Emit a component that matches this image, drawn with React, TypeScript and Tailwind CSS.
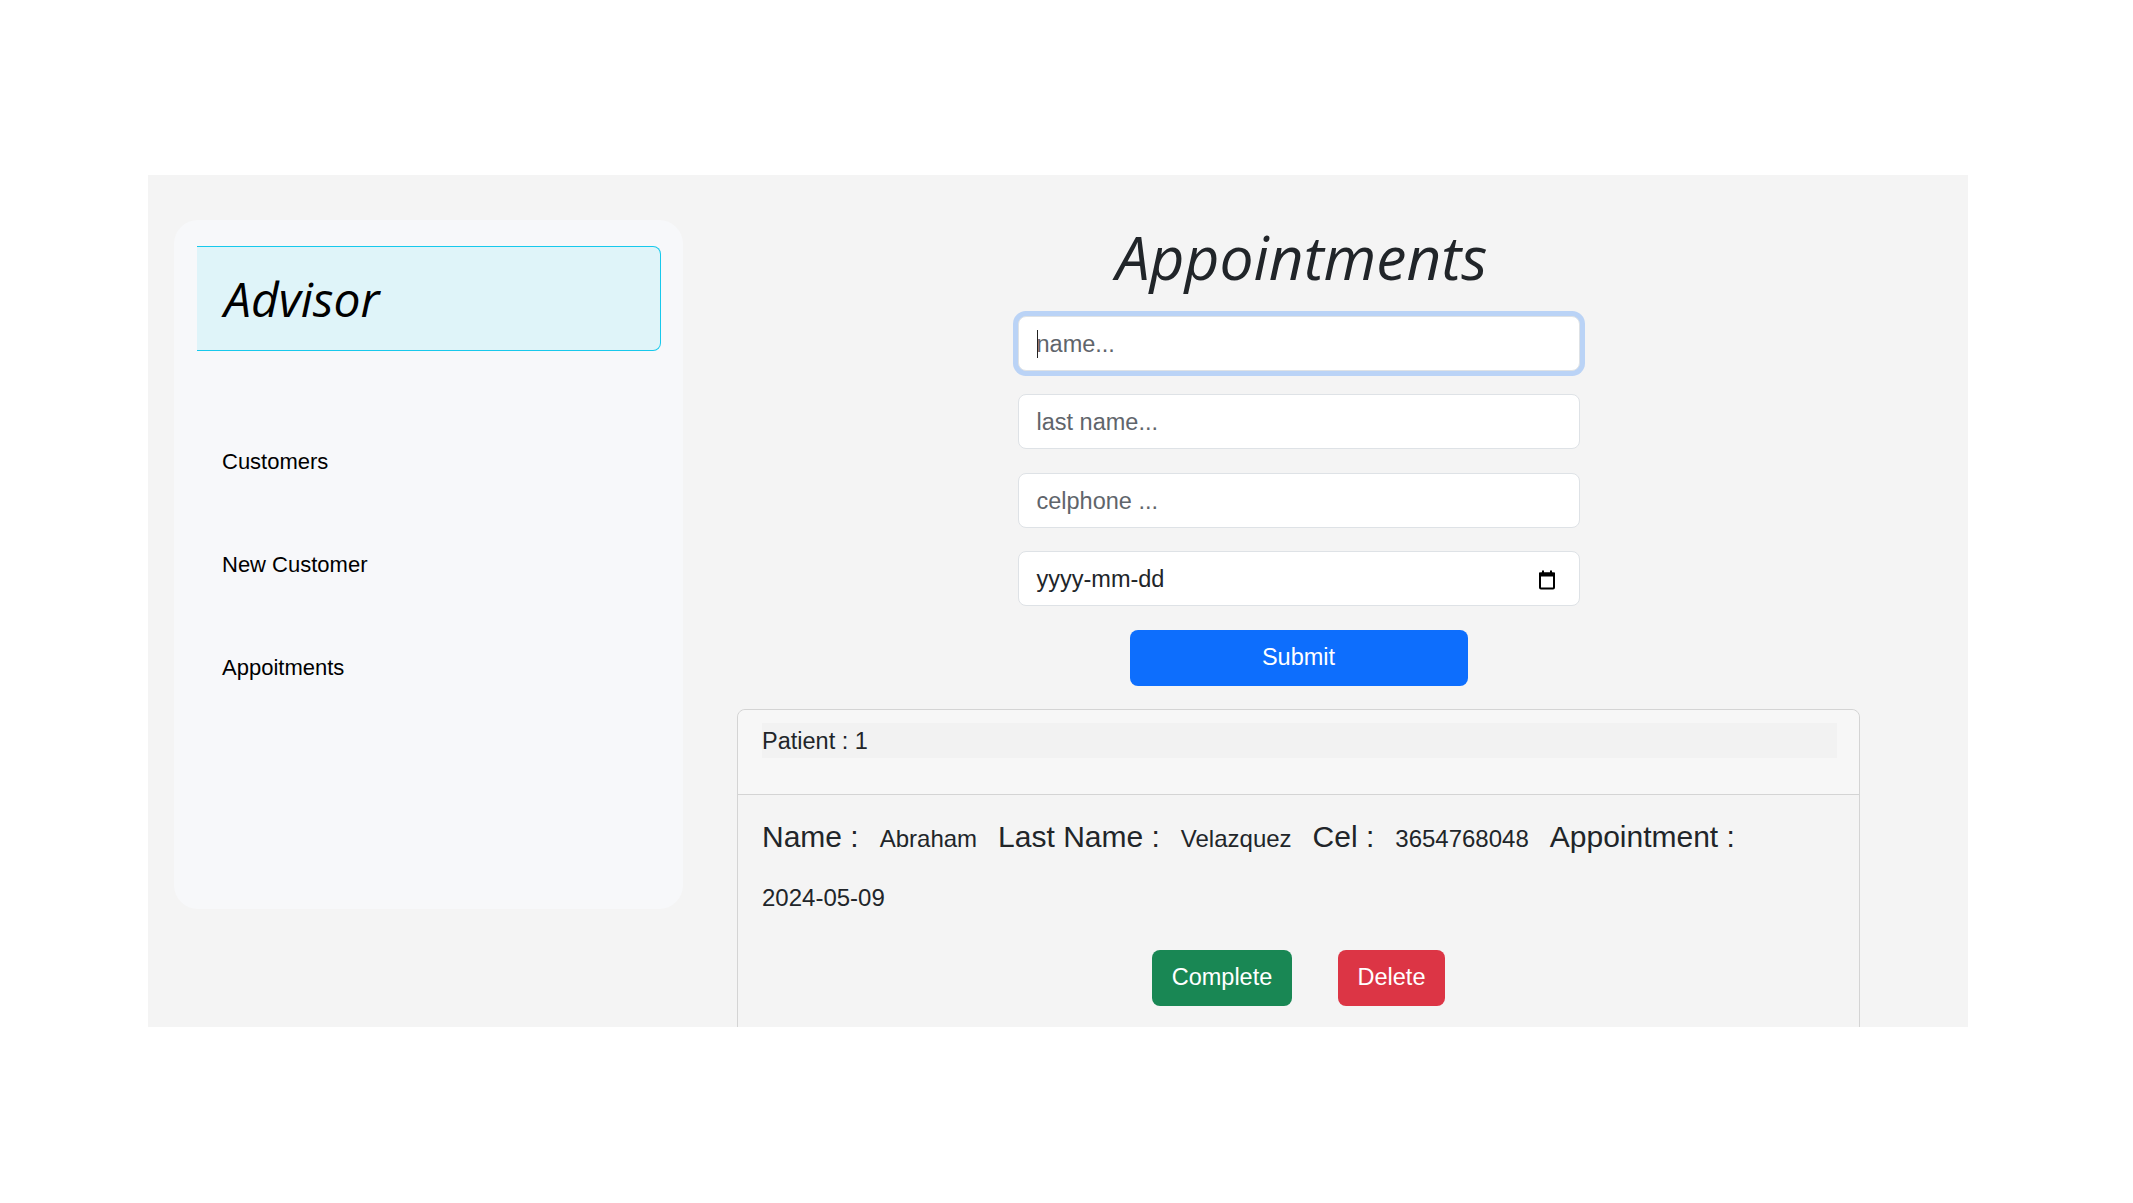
import React from 'react';

const sans = { fontFamily: '"Liberation Sans", Arial, sans-serif' };

const CalendarIcon: React.FC = () => (
  <svg width="20" height="20" viewBox="0 0 20 20" aria-hidden="true">
    <rect x="3" y="3.5" width="14" height="15" rx="1" fill="none" stroke="#000" strokeWidth="2" />
    <rect x="2" y="2.5" width="16" height="4" fill="#000" />
    <rect x="5" y="0.5" width="2" height="3" fill="#000" />
    <rect x="13" y="0.5" width="2" height="3" fill="#000" />
  </svg>
);

const navItems = ['Customers', 'New Customer', 'Appoitments'];

const Sidebar: React.FC = () => (
  <aside className="ml-[26px] mt-[45px] h-[689px] w-[509px] shrink-0 rounded-[24px] bg-[#f7f8fa] pt-[26px]">
    <div className="ml-[23px] flex h-[105px] w-[464px] items-center rounded-r-[8px] border-y-[1.5px] border-r-[1.5px] border-[#17c9ec] bg-[#dff4f9] pl-[27px]">
      <h1 className="text-[48px] italic font-normal leading-none text-black" style={{ fontFamily: '"Open Sans", sans-serif' }}>
        Advisor
      </h1>
    </div>
    <nav className="mt-[98px] flex flex-col gap-[77px] pl-[48px]">
      {navItems.map((item) => (
        <a key={item} className="text-[22px] leading-[26px] text-black">
          {item}
        </a>
      ))}
    </nav>
  </aside>
);

const inputBase =
  'h-[55px] w-[562px] rounded-[8px] border border-[#dee2e6] bg-white px-[18px] pt-[2px] text-[23.5px] text-[#212529] placeholder:text-[#5f656b] outline-none';

const Field: React.FC<{ label: string; value: string }> = ({ label, value }) => (
  <>
    <span className="text-[30px] leading-[36px] text-[#212529]">{label}</span>
    <span className="text-[24px] leading-[36px] text-[#212529]">{value}</span>
  </>
);

const AppointmentCard: React.FC = () => (
  <div className="mt-[23px] h-[440px] w-full shrink-0 rounded-t-[8px] border border-[#d4d4d4] bg-[#f4f4f4]">
    <div className="h-[85px] rounded-t-[8px] border-b border-[#d4d4d4] bg-[#f7f7f7] pl-[24px] pr-[22px] pt-[13px]">
      <div className="flex h-[35px] items-center bg-[#f2f2f2] pt-[2px] text-[23.5px] text-[#212529]">Patient : 1</div>
    </div>
    <div className="px-[24px] pt-[24px]">
      <div className="flex flex-wrap items-baseline gap-x-[21px] gap-y-[23px]">
        <Field label="Name :" value="Abraham" />
        <Field label="Last Name :" value="Velazquez" />
        <Field label="Cel :" value="3654768048" />
        <span className="text-[30px] leading-[36px] text-[#212529]">Appointment :</span>
        <span className="text-[24px] leading-[36px] text-[#212529]">2024-05-09</span>
      </div>
      <div className="mt-[34px] flex justify-center gap-[46px]">
        <button className="h-[56px] w-[140px] rounded-[8px] bg-[#198754] text-[23.5px] text-white">Complete</button>
        <button className="h-[56px] w-[107px] rounded-[8px] bg-[#dc3545] text-[23.5px] text-white">Delete</button>
      </div>
    </div>
  </div>
);

export default function App() {
  return (
    <div className="min-h-[1203px] w-[2133px] bg-white pt-[175px]" style={sans}>
      <div className="ml-[148px] flex h-[852px] w-[1820px] overflow-hidden bg-[#f4f4f4]">
        <Sidebar />
        <main className="ml-[54px] mr-[108px] flex flex-1 flex-col items-center pt-[47px]">
          <h2
            className="pl-[6px] text-[60.5px] italic font-normal leading-[1.17] text-[#212529]"
            style={{ fontFamily: '"Open Sans", sans-serif' }}
          >
            Appointments
          </h2>
          <form className="mt-[23px] flex flex-col items-center gap-[23.5px]" onSubmit={(e) => e.preventDefault()}>
            <div className="relative">
              <input
                placeholder="name..."
                className={`${inputBase} border-[#86b7fe] shadow-[0_0_0_5px_rgba(13,110,253,0.25)]`}
              />
              <span className="absolute left-[19px] top-[14px] h-[28px] w-px bg-[#222]" />
            </div>
            <input placeholder="last name..." className={inputBase} />
            <input placeholder="celphone ..." className={inputBase} />
            <div className={`${inputBase} flex items-center justify-between pr-[22px]`}>
              <span>yyyy-mm-dd</span>
              <CalendarIcon />
            </div>
            <button type="submit" className="h-[56px] w-[338px] rounded-[8px] bg-[#0d6efd] text-[23.5px] text-white">
              Submit
            </button>
          </form>
          <AppointmentCard />
        </main>
      </div>
    </div>
  );
}
